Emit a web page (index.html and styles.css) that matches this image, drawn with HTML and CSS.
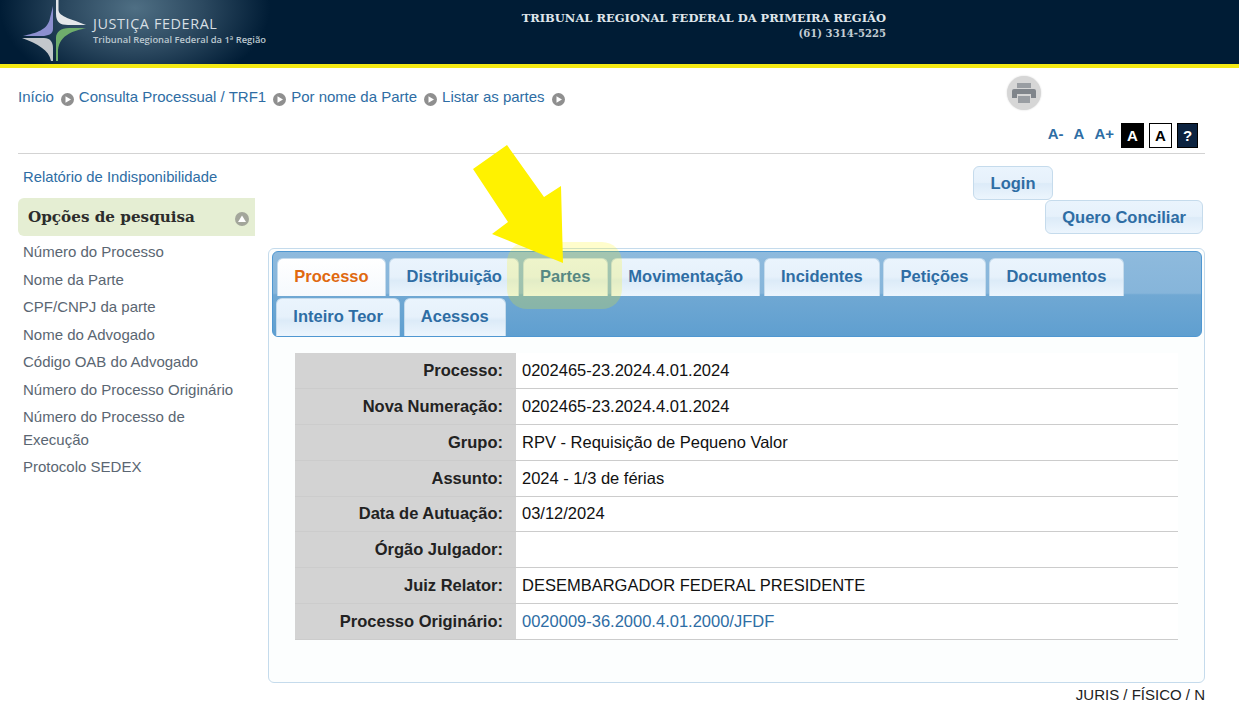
FILE: index.html
```html
<!DOCTYPE html>
<html lang="pt-BR">
<head>
    <meta charset="UTF-8">
    <title>Consulta Processual</title>
    <link rel="stylesheet" href="styles.css">
</head>
<body>
    <header class="topo">
        <div class="logo">
            <svg class="logo-marca" width="100" height="64" viewBox="0 0 100 64">
                <path fill="#e4e7ea" d="M56 0H58.5V10C59 17 72 19 86 25H68C60 25 56 22 56 14Z"/>
                <path fill="#8c8fd0" d="M53 6V29C53 34 48 36 42 36H23C36 33 48 30 50 18Z"/>
                <path fill="#c3c7cc" d="M22 38H44C50 38 53 42 53 48V61H51C49 50 38 44 22 38Z"/>
                <path fill="#6fae6c" d="M56 61V38C56 32 61 28 69 28H86C74 31 60 34 58 50V61Z"/>
            </svg>
            <div class="logo-texto">
                <span class="logo-titulo">JUSTIÇA FEDERAL</span>
                <span class="logo-sub">Tribunal Regional Federal da 1ª Região</span>
            </div>
        </div>
        <div class="topo-orgao">
            <div class="orgao-nome">TRIBUNAL REGIONAL FEDERAL DA PRIMEIRA REGIÃO</div>
            <div class="orgao-fone">(61) 3314-5225</div>
        </div>
    </header>

    <div class="pagina">
        <div class="barra">
            <nav class="trilha">
                <a href="#">Início</a>
                <svg class="seta" width="13" height="13" viewBox="0 0 13 13"><circle cx="6.5" cy="6.5" r="6.5" fill="#8f8f8f"/><path d="M4.5 3.2V9.8L10 6.5Z" fill="#fff"/></svg>
                <a href="#">Consulta Processual / TRF1</a>
                <svg class="seta" width="13" height="13" viewBox="0 0 13 13"><circle cx="6.5" cy="6.5" r="6.5" fill="#8f8f8f"/><path d="M4.5 3.2V9.8L10 6.5Z" fill="#fff"/></svg>
                <a href="#">Por nome da Parte</a>
                <svg class="seta" width="13" height="13" viewBox="0 0 13 13"><circle cx="6.5" cy="6.5" r="6.5" fill="#8f8f8f"/><path d="M4.5 3.2V9.8L10 6.5Z" fill="#fff"/></svg>
                <a href="#">Listar as partes</a>
                <svg class="seta" width="13" height="13" viewBox="0 0 13 13"><circle cx="6.5" cy="6.5" r="6.5" fill="#8f8f8f"/><path d="M4.5 3.2V9.8L10 6.5Z" fill="#fff"/></svg>
            </nav>
            <div class="impressora">
                <svg width="24" height="20" viewBox="0 0 24 20">
                    <rect x="5" y="0" width="14" height="5" fill="#999da2"/>
                    <path d="M2 6H22A2 2 0 0 1 24 8V15H19V11H5V15H0V8A2 2 0 0 1 2 6Z" fill="#80858b"/>
                    <rect x="6" y="13" width="12" height="7" fill="#999da2"/>
                </svg>
            </div>
        </div>

        <div class="acessibilidade">
            <a href="#" class="fonte">A-</a>
            <a href="#" class="fonte">A</a>
            <a href="#" class="fonte">A+</a>
            <a href="#" class="caixa caixa-preta">A</a>
            <a href="#" class="caixa caixa-branca">A</a>
            <a href="#" class="caixa caixa-ajuda">?</a>
        </div>

        <div class="colunas">
            <aside class="lateral">
                <a href="#" class="relatorio">Relatório de Indisponibilidade</a>
                <div class="opcoes">
                    <span>Opções de pesquisa</span>
                    <svg width="14" height="14" viewBox="0 0 14 14"><circle cx="7" cy="7" r="7" fill="#a3a69b"/><path d="M7 3.5L11 10H3Z" fill="#fff"/></svg>
                </div>
                <ul class="menu">
                    <li><a href="#">Número do Processo</a></li>
                    <li><a href="#">Nome da Parte</a></li>
                    <li><a href="#">CPF/CNPJ da parte</a></li>
                    <li><a href="#">Nome do Advogado</a></li>
                    <li><a href="#">Código OAB do Advogado</a></li>
                    <li><a href="#">Número do Processo Originário</a></li>
                    <li><a href="#">Número do Processo de Execução</a></li>
                    <li><a href="#">Protocolo SEDEX</a></li>
                </ul>
            </aside>

            <main class="principal">
                <div class="botoes">
                    <a href="#" class="botao botao-login">Login</a>
                    <a href="#" class="botao botao-conciliar">Quero Conciliar</a>
                </div>

                <section class="painel">
                    <ul class="abas">
                        <li class="aba ativa">Processo</li>
                        <li class="aba">Distribuição</li>
                        <li class="aba">Partes</li>
                        <li class="aba">Movimentação</li>
                        <li class="aba">Incidentes</li>
                        <li class="aba">Petições</li>
                        <li class="aba">Documentos</li>
                        <li class="aba">Inteiro Teor</li>
                        <li class="aba">Acessos</li>
                    </ul>

                    <table class="dados">
                        <tr><th>Processo:</th><td>0202465-23.2024.4.01.2024</td></tr>
                        <tr><th>Nova Numeração:</th><td>0202465-23.2024.4.01.2024</td></tr>
                        <tr><th>Grupo:</th><td>RPV - Requisição de Pequeno Valor</td></tr>
                        <tr><th>Assunto:</th><td>2024 - 1/3 de férias</td></tr>
                        <tr><th>Data de Autuação:</th><td>03/12/2024</td></tr>
                        <tr><th>Órgão Julgador:</th><td></td></tr>
                        <tr><th>Juiz Relator:</th><td>DESEMBARGADOR FEDERAL PRESIDENTE</td></tr>
                        <tr><th>Processo Originário:</th><td><a href="#">0020009-36.2000.4.01.2000/JFDF</a></td></tr>
                    </table>
                </section>
                <div class="rodape">JURIS / FÍSICO / N</div>
            </main>
        </div>
    </div>

    <!-- destaque sobre a aba Partes -->
    <div class="destaque"></div>
    <svg class="flecha" width="100" height="125" viewBox="0 0 100 125">
        <path fill="#fff200" d="M35 7L1 31L36 84L20 96L91 125L89 48L72 59Z"/>
    </svg>
</body>
</html>
```

FILE: styles.css
```css
html, body {
    margin: 0;
    padding: 0;
}
body {
    position: relative;
    font-family: "Liberation Sans", Arial, sans-serif;
    font-size: 15px;
    color: #222;
    background: #fff;
    height: 704px;
    overflow: hidden;
}
a {
    color: #2e6da4;
    text-decoration: none;
}
ul {
    list-style: none;
    margin: 0;
    padding: 0;
}

/* topo */
.topo {
    display: flex;
    justify-content: space-between;
    height: 64px;
    border-bottom: 4px solid #f5ea14;
    background: radial-gradient(ellipse 135px 85px at 135px 8px, #4f6f84 0%, #2c4960 50%, #001c35 100%) #001c35;
}
.logo {
    display: flex;
    width: 360px;
}
.logo-marca {
    flex: none;
}
.logo-texto {
    display: flex;
    flex-direction: column;
    padding-top: 16px;
    margin-left: -7px;
    color: #d7dfe4;
}
.logo-titulo {
    font-family: "Open Sans", sans-serif;
    font-size: 14.4px;
    line-height: 16px;
    letter-spacing: 0.6px;
}
.logo-sub {
    font-family: "Open Sans", sans-serif;
    font-weight: 600;
    font-size: 9.4px;
    line-height: 15px;
    color: #bcc8d0;
}
.topo-orgao {
    padding-top: 11px;
    margin-right: 353px;
    font-family: "DejaVu Serif", serif;
    font-weight: bold;
    text-align: right;
    color: #dfe5ea;
}
.orgao-nome {
    font-size: 11.5px;
    line-height: 15px;
}
.orgao-fone {
    font-size: 10.1px;
    line-height: 16px;
    color: #c3ccd3;
}

.pagina {
    padding: 0 34px 0 18px;
}

/* trilha */
.barra {
    display: flex;
    height: 54px;
    padding-top: 8px;
    box-sizing: border-box;
}
.trilha {
    display: flex;
    align-items: center;
    gap: 5px;
    width: 989px;
    height: 40px;
    font-size: 15px;
}
.seta {
    margin: 6px 0 0 2px;
}
.impressora {
    display: flex;
    align-items: center;
    justify-content: center;
    width: 34px;
    height: 34px;
    border-radius: 50%;
    background: #d6d6d6;
    box-shadow: 0 0 2px #d6d6d6;
}

/* controles de fonte */
.acessibilidade {
    display: flex;
    justify-content: flex-end;
    align-items: flex-start;
    gap: 5px;
    height: 30px;
    padding: 1px 7px 0 0;
    border-bottom: 1px solid #d3d3d3;
}
.fonte {
    margin-right: 5px;
    font-weight: bold;
    font-size: 15px;
    line-height: 21px;
}
.fonte + .caixa {
    margin-left: -3px;
}
.caixa {
    box-sizing: border-box;
    width: 23px;
    height: 25px;
    line-height: 23px;
    text-align: center;
    font-weight: bold;
    font-size: 15px;
    border: 1px solid #000;
}
.caixa-preta {
    background: #000;
    color: #fff;
}
.caixa-branca {
    background: #fff;
    color: #000;
}
.caixa-ajuda {
    width: 21px;
    background: #0c2340;
    color: #fff;
}

/* colunas */
.colunas {
    display: flex;
}
.lateral {
    width: 237px;
    margin-right: 13px;
    flex: none;
}
.relatorio {
    display: block;
    padding: 15px 0 0 5px;
    font-size: 14.8px;
    line-height: 17px;
}
.opcoes {
    display: flex;
    justify-content: space-between;
    align-items: center;
    height: 38px;
    margin-top: 12px;
    padding: 0 6px 0 10px;
    background: #e5eed3;
    border-radius: 6px 0 0 6px;
    font-family: "DejaVu Serif", serif;
    font-weight: bold;
    font-size: 15.2px;
    color: #2c2c2c;
}
.opcoes svg {
    margin-top: 3px;
}
.menu {
    padding: 2px 10px 0 5px;
}
.menu li {
    padding: 2.25px 0;
    line-height: 23px;
}
.menu li:last-child {
    margin-top: -0.6px;
}
.menu a {
    color: #5a6672;
}

/* area principal */
.principal {
    flex: 1;
    min-width: 0;
}
.botoes {
    display: flex;
    flex-direction: column;
    align-items: flex-end;
    height: 94px;
    padding: 12px 2px 0 0;
    box-sizing: border-box;
}
.botao {
    box-sizing: border-box;
    display: block;
    height: 34px;
    line-height: 32px;
    padding: 0 16px;
    border: 1px solid #c5dbec;
    border-radius: 6px;
    font-weight: bold;
    font-size: 16.5px;
    background: linear-gradient(#eaf4fd 0%, #e6f1fb 48%, #dcebf8 52%, #ecf5fd 100%);
}
.botao-login {
    margin-right: 150px;
    padding: 0 16.5px;
}
.painel {
    box-sizing: border-box;
    height: 435px;
    padding: 2px 2px 0 3px;
    border: 1px solid #c5dbec;
    border-radius: 6px;
    background: #fcfefe;
}
.abas {
    box-sizing: border-box;
    display: flex;
    flex-wrap: wrap;
    align-content: flex-start;
    height: 86px;
    padding: 6px 0 0 3px;
    column-gap: 3.4px;
    row-gap: 2px;
    border: 1px solid #4f97d1;
    border-radius: 6px;
    background: linear-gradient(#8ebadd 0%, #86b5da 49%, #70a8d3 51%, #5f9fd0 100%);
}
.aba {
    box-sizing: border-box;
    height: 38px;
    line-height: 34px;
    padding: 0 16.3px;
    border: 1px solid #c5dbec;
    border-bottom: none;
    border-radius: 6px 6px 0 0;
    font-weight: bold;
    font-size: 16.5px;
    color: #2e6da4;
    background: linear-gradient(#eaf4fd 0%, #e6f1fb 48%, #dcebf8 58%, #ecf5fd 100%);
}
.aba.ativa {
    margin-left: 1px;
    color: #e0690f;
    background: linear-gradient(#fff 0%, #f5f9fd 100%);
}
.dados {
    width: 883px;
    margin: 16px 0 0 23px;
    border-collapse: collapse;
    color: #111;
}
.dados tr {
    height: 35.75px;
}
.dados th, .dados td {
    padding: 0 6px;
    border-bottom: 1px solid #ccc;
    font-size: 16.5px;
}
.dados th {
    width: 202px;
    padding-right: 13px;
    background: #d3d3d3;
    text-align: right;
    font-weight: bold;
    color: #222;
}
.dados td {
    background: #fff;
}
.rodape {
    padding-top: 3px;
    text-align: right;
    font-size: 15px;
    line-height: 17px;
    color: #222;
}

/* destaque amarelo, por cima das abas */
.destaque {
    position: absolute;
    left: 507px;
    top: 242px;
    width: 115px;
    height: 67px;
    border-radius: 20px;
    background: rgba(255, 247, 0, 0.2);
}
.flecha {
    position: absolute;
    left: 472px;
    top: 138px;
}
```
